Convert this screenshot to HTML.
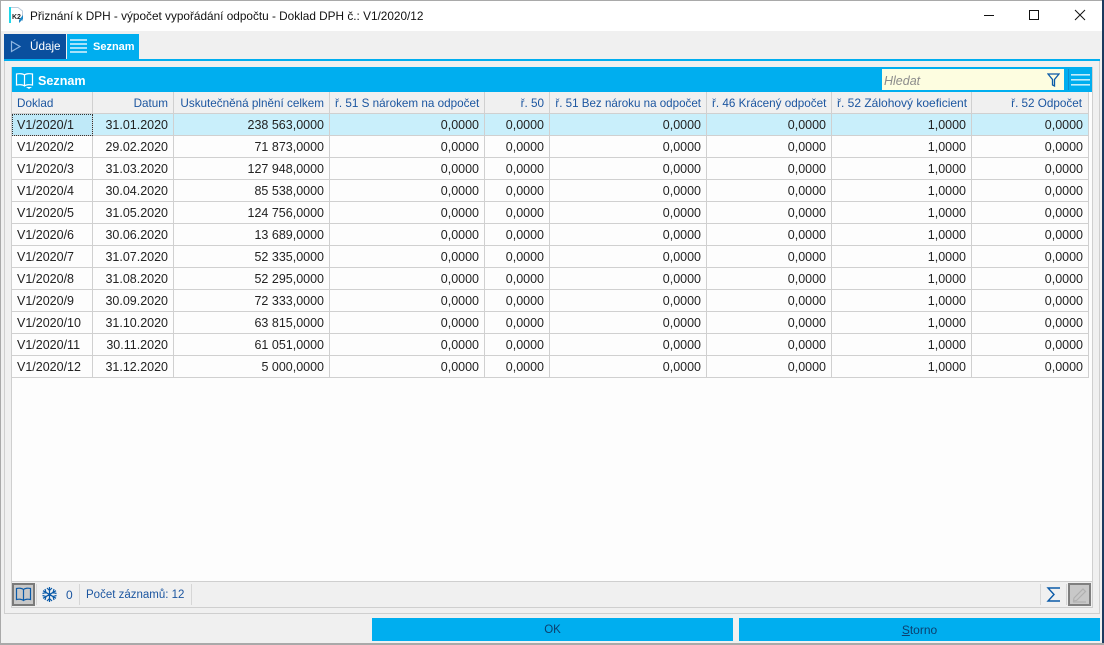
<!DOCTYPE html>
<html><head><meta charset="utf-8"><style>
html,body{margin:0;padding:0}
body{width:1104px;height:645px;position:relative;overflow:hidden;background:#f0f0f0;font:12.5px "Liberation Sans",sans-serif}
.a{position:absolute;box-sizing:border-box}
.t{position:absolute;white-space:nowrap;line-height:16px}
table{position:absolute;left:12px;top:92px;width:1077px;border-collapse:separate;border-spacing:0;table-layout:fixed}
td,th{box-sizing:border-box;height:22px;padding:1px 5px 0 5px;text-align:right;white-space:nowrap;overflow:hidden;border-right:1px solid #d0d0d0;border-bottom:1px solid #d0d0d0;font-weight:normal;color:#222;font-size:12.5px}
th{height:22px;background:#f0f0f0;color:#1c56a0;font-size:11.7px}
td{background:#fdfdfd}
td:first-child,th:first-child{text-align:left}
tr.s td{background:#c9effb}
tr.s td:first-child{background:#bfe9f8;outline:1px dotted #333;outline-offset:-1px}
</style></head><body>
<div class="a" style="left:0;top:0;width:1104px;height:31px;background:#fff;border-top:1px solid #a9a9a9"></div>
<div class="a" style="left:0;top:0;width:1px;height:645px;background:#a9a9a9"></div>
<div class="a" style="left:1102px;top:0;width:2px;height:645px;background:#1b3a5e"></div>
<div class="a" style="left:0;top:643px;width:1104px;height:2px;background:#a9a9a9"></div>
<svg class="a" style="left:8px;top:6px" width="18" height="18" viewBox="0 0 18 18"><rect x="1" y="1" width="2" height="16" fill="#1fd7e8"/><path d="M3 1.5H10L14.5 5V15" fill="none" stroke="#bcd" stroke-width="1"/><rect x="4" y="7" width="10" height="6" fill="#fff"/><text x="4" y="13" font-family="Liberation Sans" font-weight="700" font-size="7" fill="#222">K2</text><path d="M11 17L15 13V9L11 14Z" fill="#1e88c8"/></svg>
<div class="t" style="left:30px;top:8px;color:#111;font-size:11.8px">Přiznání k DPH - výpočet vypořádání odpočtu - Doklad DPH č.: V1/2020/12</div>
<svg class="a" style="left:980px;top:5px" width="115" height="20" viewBox="0 0 115 20" fill="none" stroke="#111" stroke-width="1"><path d="M4 10.5H14"/><rect x="49.5" y="5.5" width="9" height="9"/><path d="M95 5L105 15M105 5L95 15"/></svg>

<div class="a" style="left:4px;top:34px;width:62px;height:25px;background:#0a4f9e"></div>
<svg class="a" style="left:10px;top:40px" width="12" height="13" viewBox="0 0 12 13"><path d="M1.5 1.5V11.5L10 6.5Z" fill="none" stroke="#8fb6e2" stroke-width="1.2"/></svg>
<div class="t" style="left:30px;top:39px;color:#fff;font-size:11.7px">Údaje</div>
<div class="a" style="left:67px;top:34px;width:72px;height:25px;background:#00aeef"></div>
<svg class="a" style="left:70px;top:38px" width="17" height="16" viewBox="0 0 17 16" fill="#a8e2fa"><rect y="1" width="17" height="2"/><rect y="5" width="17" height="2"/><rect y="9" width="17" height="2"/><rect y="13" width="17" height="2"/></svg>
<div class="t" style="left:93px;top:39px;color:#fff;font-size:11px;font-weight:700">Seznam</div>
<div class="a" style="left:4px;top:59px;width:1096px;height:2px;background:#00aeef"></div>

<div class="a" style="left:4px;top:61px;width:1096px;height:553px;border:1px solid #cfcfcf;border-top:0;background:#f0f0f0"></div>
<div class="a" style="left:11px;top:67px;width:1082px;height:541px;border:1px solid #cfcfcf;background:#fdfdfd"></div>
<div class="a" style="left:12px;top:67px;width:1080px;height:25px;background:#00aeef"></div>
<svg class="a" style="left:15px;top:72px" width="20" height="17" viewBox="0 0 20 17" fill="none" stroke="#fff" stroke-width="1.2"><path d="M9.5 3C8 1.5 4 1.5 1.5 2V13C4 12.5 8 12.5 9.5 14C11 12.5 15 12.5 17.5 13V2C15 1.5 11 1.5 9.5 3ZM9.5 3V14"/><path d="M11 15H17L14 17Z" fill="#fff" stroke="none"/></svg>
<div class="t" style="left:38px;top:73px;color:#fff;font-size:12.6px;font-weight:700">Seznam</div>
<div class="a" style="left:882px;top:69px;width:182px;height:21px;background:#fdfde0"></div>
<div class="t" style="left:884px;top:73px;color:#8b8b8b;font-style:italic;font-size:12.5px">Hledat</div>
<svg class="a" style="left:1047px;top:73px" width="13" height="14" viewBox="0 0 13 14" fill="none" stroke="#0a5aa8" stroke-width="1.3"><path d="M1 1H12L7.5 6.5V13L5.5 12V6.5Z"/></svg>
<div class="a" style="left:1068px;top:69px;width:1px;height:21px;background:#0a8fd0"></div>
<svg class="a" style="left:1071px;top:74px" width="19" height="13" viewBox="0 0 19 13" fill="#c4ecfb"><rect y="0" width="19" height="1.6"/><rect y="5" width="19" height="1.6"/><rect y="10" width="19" height="1.6"/></svg>

<table><colgroup><col style="width:81px"><col style="width:81px"><col style="width:156px"><col style="width:155px"><col style="width:65px"><col style="width:157px"><col style="width:125px"><col style="width:140px"><col style="width:117px"></colgroup>
<tr><th>Doklad</th><th>Datum</th><th>Uskutečněná plnění celkem</th><th>ř. 51 S nárokem na odpočet</th><th>ř. 50</th><th style="font-size:11.6px">ř. 51 Bez nároku na odpočet</th><th>ř. 46 Krácený odpočet</th><th style="font-size:12px">ř. 52 Zálohový koeficient</th><th style="padding-right:6px">ř. 52 Odpočet</th></tr>
<tr class="s"><td>V1/2020/1</td><td>31.01.2020</td><td>238 563,0000</td><td>0,0000</td><td>0,0000</td><td>0,0000</td><td>0,0000</td><td>1,0000</td><td>0,0000</td></tr>
<tr><td>V1/2020/2</td><td>29.02.2020</td><td>71 873,0000</td><td>0,0000</td><td>0,0000</td><td>0,0000</td><td>0,0000</td><td>1,0000</td><td>0,0000</td></tr>
<tr><td>V1/2020/3</td><td>31.03.2020</td><td>127 948,0000</td><td>0,0000</td><td>0,0000</td><td>0,0000</td><td>0,0000</td><td>1,0000</td><td>0,0000</td></tr>
<tr><td>V1/2020/4</td><td>30.04.2020</td><td>85 538,0000</td><td>0,0000</td><td>0,0000</td><td>0,0000</td><td>0,0000</td><td>1,0000</td><td>0,0000</td></tr>
<tr><td>V1/2020/5</td><td>31.05.2020</td><td>124 756,0000</td><td>0,0000</td><td>0,0000</td><td>0,0000</td><td>0,0000</td><td>1,0000</td><td>0,0000</td></tr>
<tr><td>V1/2020/6</td><td>30.06.2020</td><td>13 689,0000</td><td>0,0000</td><td>0,0000</td><td>0,0000</td><td>0,0000</td><td>1,0000</td><td>0,0000</td></tr>
<tr><td>V1/2020/7</td><td>31.07.2020</td><td>52 335,0000</td><td>0,0000</td><td>0,0000</td><td>0,0000</td><td>0,0000</td><td>1,0000</td><td>0,0000</td></tr>
<tr><td>V1/2020/8</td><td>31.08.2020</td><td>52 295,0000</td><td>0,0000</td><td>0,0000</td><td>0,0000</td><td>0,0000</td><td>1,0000</td><td>0,0000</td></tr>
<tr><td>V1/2020/9</td><td>30.09.2020</td><td>72 333,0000</td><td>0,0000</td><td>0,0000</td><td>0,0000</td><td>0,0000</td><td>1,0000</td><td>0,0000</td></tr>
<tr><td>V1/2020/10</td><td>31.10.2020</td><td>63 815,0000</td><td>0,0000</td><td>0,0000</td><td>0,0000</td><td>0,0000</td><td>1,0000</td><td>0,0000</td></tr>
<tr><td>V1/2020/11</td><td>30.11.2020</td><td>61 051,0000</td><td>0,0000</td><td>0,0000</td><td>0,0000</td><td>0,0000</td><td>1,0000</td><td>0,0000</td></tr>
<tr><td>V1/2020/12</td><td>31.12.2020</td><td>5 000,0000</td><td>0,0000</td><td>0,0000</td><td>0,0000</td><td>0,0000</td><td>1,0000</td><td>0,0000</td></tr>
</table>

<div class="a" style="left:12px;top:581px;width:1080px;height:26px;background:#f0f0f0;border-top:1px solid #cfcfcf"></div>
<div class="a" style="left:12px;top:583px;width:23px;height:23px;border:2px solid #7a7a7a;background:#c8c8c8"></div>
<svg class="a" style="left:15px;top:587px" width="17" height="15" viewBox="0 0 17 15" fill="none" stroke="#0a5aa8" stroke-width="1.2"><path d="M8.5 2.5C7 1 3.5 1 1.5 1.5V12.5C3.5 12 7 12 8.5 13.5C10 12 13.5 12 15.5 12.5V1.5C13.5 1 10 1 8.5 2.5ZM8.5 2.5V13.5"/></svg>
<div class="a" style="left:36px;top:584px;width:1px;height:21px;background:#d6d6d6"></div>
<svg class="a" style="left:41px;top:586px" width="17" height="17" viewBox="0 0 17 17" fill="none" stroke="#0a5aa8" stroke-width="1.2"><path d="M8.5 1V16M2 4.7L15 12.3M15 4.7L2 12.3M6 2L8.5 4.5L11 2M6 15L8.5 12.5L11 15M1.5 7.5L5 6.5L4 3M15.5 7.5L12 6.5L13 3M1.5 9.5L5 10.5L4 14M15.5 9.5L12 10.5L13 14"/></svg>
<div class="t" style="left:66px;top:587px;color:#1c56a0;font-size:12px">0</div>
<div class="a" style="left:79px;top:584px;width:1px;height:21px;background:#d6d6d6"></div>
<div class="t" style="left:86px;top:587px;color:#1c56a0;font-size:11.5px">Počet záznamů: 12</div>
<div class="a" style="left:191px;top:584px;width:1px;height:21px;background:#d6d6d6"></div>
<div class="a" style="left:1040px;top:584px;width:1px;height:21px;background:#d6d6d6"></div>
<svg class="a" style="left:1046px;top:586px" width="15" height="17" viewBox="0 0 15 17" fill="none" stroke="#0a5aa8" stroke-width="1.4"><path d="M14 2H2L8 8.5L2 15H14"/></svg>
<div class="a" style="left:1066px;top:584px;width:1px;height:21px;background:#d6d6d6"></div>
<div class="a" style="left:1068px;top:583px;width:23px;height:23px;border:2px solid #7f7f7f;background:#c8c8c8"></div>
<svg class="a" style="left:1071px;top:586px" width="17" height="17" viewBox="0 0 17 17" fill="none" stroke="#b0b0b0" stroke-width="1.2"><path d="M3 12L12 3L14.5 5.5L5.5 14.5L2.5 15Z"/><path d="M2 16H15"/></svg>

<div class="a" style="left:372px;top:618px;width:361px;height:23px;background:#00aeef;color:#0c3f6e;text-align:center;line-height:25px;font-size:11.5px">OK</div>
<div class="a" style="left:739px;top:618px;width:361px;height:23px;background:#00aeef;color:#0c3f6e;text-align:center;line-height:24px;font-size:12px"><u>S</u>torno</div>
</body></html>
